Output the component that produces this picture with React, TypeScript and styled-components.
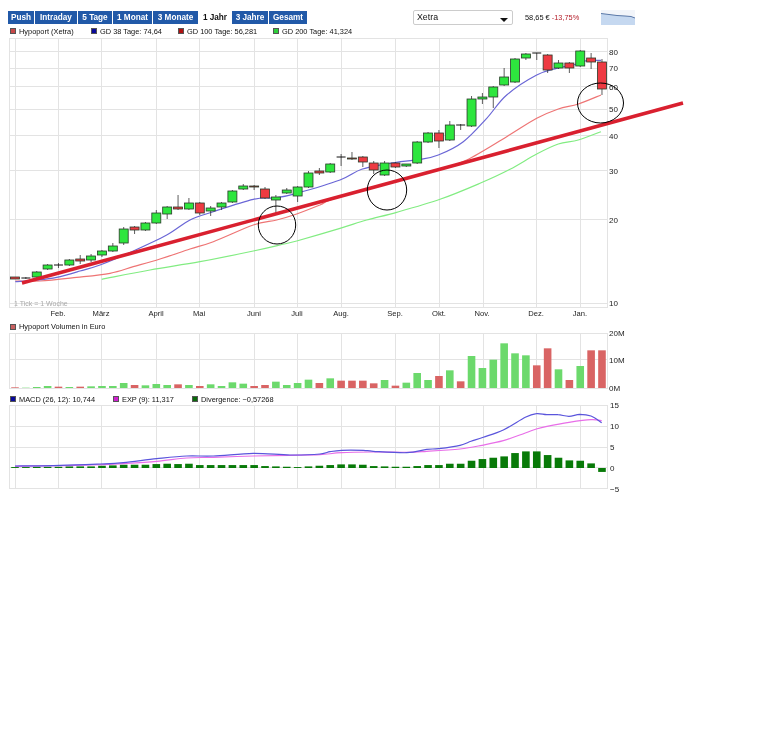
import React from 'react'
import styled, { createGlobalStyle } from 'styled-components'

const GlobalStyle = createGlobalStyle`
  html, body {
    margin: 0;
    padding: 0;
    background: #fff;
  }
`

const FONT = '"Liberation Sans", Arial, sans-serif'

const Page = styled.div`
  width: 768px;
  height: 734px;
  overflow: hidden;
  font-family: ${FONT};
  color: #111;
  background: #fff;
  filter: blur(0.25px);
`

const Toolbar = styled.div`
  display: flex;
  align-items: center;
  height: 14px;
  padding: 10px 0 0 8px;
`

const Tabs = styled.div`
  display: flex;
  gap: 1px;
  width: 405px;
`

const Tab = styled.div<{ $w: number; $active?: boolean }>`
  width: ${({ $w }) => $w}px;
  height: 13px;
  line-height: 13px;
  text-align: center;
  font-size: 8.2px;
  font-weight: bold;
  color: ${({ $active }) => ($active ? '#111' : '#fff')};
  background: ${({ $active }) => ($active ? '#fff' : '#2159a8')};
`

const Select = styled.div`
  position: relative;
  box-sizing: border-box;
  width: 100px;
  height: 15px;
  padding-left: 3px;
  line-height: 13px;
  font-size: 8.8px;
  color: #111;
  border: 1px solid #ccc;
  border-radius: 2px;
  &::after {
    content: '';
    position: absolute;
    right: 4px;
    top: 7px;
    border-left: 4px solid transparent;
    border-right: 4px solid transparent;
    border-top: 4px solid #111;
  }
`

const Price = styled.div`
  width: 76px;
  margin-left: 12px;
  font-size: 7.4px;
  color: #111;
`

const Change = styled.span`
  color: #b5202c;
`

const Legend = styled.div<{ $h: number }>`
  display: flex;
  align-items: center;
  height: ${({ $h }) => $h}px;
  padding-left: 10px;
  font-size: 7.4px;
  color: #111;
`

const LegendItem = styled.div<{ $w?: number }>`
  display: flex;
  align-items: center;
  gap: 3px;
  width: ${({ $w }) => ($w ? `${$w}px` : 'auto')};
`

const Swatch = styled.span<{ $color: string }>`
  width: 4px;
  height: 4px;
  background: ${({ $color }) => $color};
  border: 1px solid #555;
`

const ChartSvg = styled.svg`
  display: block;
  overflow: visible;
  font-family: ${FONT};
`

const AxisText = styled.text<{ $size?: number }>`
  font-size: ${({ $size }) => $size ?? 8}px;
  fill: #222;
`

const GRID = '#e3e3e3'
const XLINES = [9, 15, 58, 101, 156, 199, 254, 297, 341, 395, 439, 483, 536, 580, 607]
const X0 = 15
const STEP = 10.87
const cx = (i: number) => X0 + i * STEP

// [bodyTop, bodyBottom, wickTop, wickBottom, up]
const CANDLES: [number, number, number, number, number][] = [
  [277, 279, 277, 279, 0],
  [278, 278.6, 277, 279, 2],
  [272, 277, 271, 278, 1],
  [265, 269, 264, 270, 1],
  [265, 265.6, 263, 268, 2],
  [260, 265, 259, 266, 1],
  [259, 261, 255, 264, 0],
  [256, 260, 254, 262, 1],
  [251, 255, 250, 257, 1],
  [246, 251, 243, 252, 1],
  [229, 243, 227, 245, 1],
  [227, 230, 226, 234, 0],
  [223, 230, 222, 231, 1],
  [213, 223, 210, 224, 1],
  [207, 214, 206, 219, 1],
  [207, 209, 195, 210, 0],
  [203, 209, 198, 210, 1],
  [203, 213, 202, 215, 0],
  [208, 211, 206, 216, 1],
  [203, 207, 202, 210, 1],
  [191, 202, 190, 203, 1],
  [186, 189, 184, 190, 1],
  [186, 187, 185, 190, 0],
  [189, 198, 187, 199, 0],
  [197, 200, 195, 213, 1],
  [190, 193, 188, 194, 1],
  [187, 196, 186, 202, 1],
  [173, 187, 171, 188, 1],
  [171, 173, 168, 175, 0],
  [164, 172, 163, 173, 1],
  [157, 157.6, 154, 166, 2],
  [158, 159, 152, 160, 0],
  [157, 162, 156, 167, 0],
  [163, 170, 161, 174, 0],
  [163, 175, 161, 176, 1],
  [163, 167, 162, 168, 0],
  [164, 166, 164, 167, 1],
  [142, 163, 141, 164, 1],
  [133, 142, 132, 143, 1],
  [133, 141, 130, 148, 0],
  [125, 140, 121, 141, 1],
  [125, 125.6, 124, 130, 2],
  [99, 126, 96, 127, 1],
  [97, 99, 93, 104, 1],
  [87, 97, 86, 108, 1],
  [77, 85, 68, 86, 1],
  [59, 82, 58, 83, 1],
  [54, 58, 53, 60, 1],
  [53, 53.6, 53, 60, 2],
  [55, 70, 54, 73, 0],
  [63, 68, 60, 69, 1],
  [63, 68, 62, 73, 0],
  [51, 66, 50, 67, 1],
  [58, 62, 53, 69, 0],
  [62, 89, 59, 95, 0],
]

const zoom3 = (pts: number[][]) => pts.map(([x, y]) => [x / 3, 170 + y / 3])
const zoom2 = (pts: number[][]) => pts.map(([x, y]) => [340 + x / 3, y / 3])
const zoom4 = (pts: number[][]) => pts.map(([x, y]) => [340 + x / 3, 170 + y / 3])
const macdA = (pts: number[][]) => pts.map(([x, y]) => [x / 3, 320 + y / 3])
const macdB = (pts: number[][]) => pts.map(([x, y]) => [320 + x / 3, 320 + y / 3])

// Catmull-Rom through the points, the curves in the picture are smooth
const smooth = (pts: number[][]) => {
  let d = `M${pts[0][0].toFixed(1)} ${pts[0][1].toFixed(1)}`
  for (let i = 0; i < pts.length - 1; i += 1) {
    const p0 = pts[Math.max(i - 1, 0)]
    const p1 = pts[i]
    const p2 = pts[i + 1]
    const p3 = pts[Math.min(i + 2, pts.length - 1)]
    const c1x = p1[0] + (p2[0] - p0[0]) / 6
    const c1y = p1[1] + (p2[1] - p0[1]) / 6
    const c2x = p2[0] - (p3[0] - p1[0]) / 6
    const c2y = p2[1] - (p3[1] - p1[1]) / 6
    d += ` C${c1x.toFixed(1)} ${c1y.toFixed(1)} ${c2x.toFixed(1)} ${c2y.toFixed(1)} ${p2[0].toFixed(1)} ${p2[1].toFixed(1)}`
  }
  return d
}

const GD38 = [
  ...zoom3([[46, 335], [110, 330], [170, 322], [240, 303], [300, 285], [395, 245], [500, 195], [570, 150], [640, 125], [760, 88], [830, 83], [890, 70], [1020, 30]]),
  ...zoom2([[65, 508], [150, 490], [240, 478], [295, 465], [370, 425], [440, 355], [500, 285], [590, 225], [650, 205], [700, 195], [740, 182], [783, 181]]),
]
const GD100 = [
  ...zoom3([[46, 333], [120, 333], [230, 322], [330, 310], [400, 290], [480, 267], [570, 237], [640, 215], [760, 165], [830, 150], [890, 132], [960, 105], [1020, 80]]),
  ...zoom2([[290, 510], [380, 480], [500, 410], [590, 355], [655, 327], [715, 312], [783, 285]]),
]
const GD200 = [
  ...zoom3([[305, 328], [450, 300], [600, 275], [760, 243], [840, 225], [890, 213]]),
  ...zoom4([[0, 175], [80, 150], [170, 127], [300, 88], [420, 40]]),
  ...zoom2([[510, 508], [590, 462], [655, 432], [715, 420], [783, 395]]),
]

const VOLUME: [number, number][] = [
  [2, 0], [1, 1], [3, 1], [6, 1], [4, 0], [3, 1], [4, 0], [5, 1], [6, 1], [6, 1],
  [15, 1], [9, 0], [8, 1], [12, 1], [9, 1], [11, 0], [9, 1], [6, 0], [11, 1], [6, 1],
  [17, 1], [13, 1], [6, 0], [9, 0], [19, 1], [9, 1], [15, 1], [25, 1], [15, 0],
  [29, 1], [22, 0], [22, 0], [22, 0], [14, 0], [24, 1], [7, 0], [16, 1], [45, 1], [24, 1],
  [36, 0], [53, 1], [20, 0], [96, 1], [60, 1], [85, 1], [134, 1], [104, 1], [98, 1],
  [68, 0], [119, 0], [56, 1], [24, 0], [66, 1], [113, 0], [113, 0],
]

const DIVERGENCE = [
  1, 1, 2, 2, 2, 3, 3, 3, 5, 6, 8, 8, 8, 10, 11, 10, 11, 7, 7, 7, 7, 7, 7, 4, 3, 2, 1, 3, 5,
  7, 9, 9, 8, 4, 3, 2, 2, 4, 7, 7, 11, 11, 20, 25, 29, 33, 43, 48, 48, 37, 29, 21, 20, 12, -10,
]

const MACD = [
  ...macdA([[45, 438], [180, 436], [300, 432], [370, 428], [470, 416], [560, 408], [640, 408], [760, 400], [870, 405]]),
  ...macdB([[0, 402], [30, 395], [65, 391], [130, 391], [160, 394], [260, 398], [320, 388], [356, 386], [420, 376], [453, 364], [490, 352], [550, 330], [616, 292], [649, 281], [680, 284], [714, 284], [747, 289], [779, 283], [813, 288], [845, 308]]),
]
const EXP = [
  ...macdA([[45, 439], [180, 437], [300, 434], [370, 431], [470, 424], [560, 414], [640, 412], [760, 408], [870, 406]]),
  ...macdB([[0, 404], [65, 398], [160, 396], [260, 397], [320, 394], [420, 387], [486, 376], [550, 362], [616, 339], [649, 327], [681, 319], [747, 307], [813, 299], [845, 302]]),
]

const MONTHS: [string, number][] = [
  ['Feb.', 58], ['März', 101], ['April', 156], ['Mai', 199], ['Juni', 254], ['Juli', 297], ['Aug.', 341],
  ['Sep.', 395], ['Okt.', 439], ['Nov.', 482], ['Dez.', 536], ['Jan.', 580],
]

const Grid = ({ top, bottom, rows }: { top: number; bottom: number; rows: number[] }) => (
  <g stroke={GRID} strokeWidth={1} shapeRendering="crispEdges">
    {XLINES.map((x) => (
      <line key={x} x1={x + 0.5} x2={x + 0.5} y1={top} y2={bottom} />
    ))}
    {[top, ...rows, bottom].map((y) => (
      <line key={y} x1={9} x2={608} y1={y + 0.5} y2={y + 0.5} />
    ))}
  </g>
)

const MainChart = () => (
  <ChartSvg width={700} height={282} viewBox="0 38 700 282">
    <Grid top={38} bottom={307} rows={[51, 68, 86, 109, 135, 170, 219, 303]} />
    {[
      ['80', 52], ['70', 68], ['60', 87], ['50', 109], ['40', 136], ['30', 171], ['20', 220], ['10', 303],
    ].map(([t, y]) => (
      <AxisText key={t} x={609} y={Number(y) + 3}>{t}</AxisText>
    ))}
    {MONTHS.map(([m, x]) => (
      <AxisText key={m} $size={7.6} x={x} y={316} textAnchor="middle">{m}</AxisText>
    ))}
    <text x={14} y={306} fontSize={7} fill="#aaa">1 Tick = 1 Woche</text>

    <path d={smooth(GD200)} fill="none" stroke="#82ec82" strokeWidth={1.2} />
    <path d={smooth(GD100)} fill="none" stroke="#ee7474" strokeWidth={1.2} />
    <path d={smooth(GD38)} fill="none" stroke="#6a66d6" strokeWidth={1.2} />

    {CANDLES.map(([top, bottom, wt, wb, kind], i) => {
      const x = cx(i)
      return (
        <g key={i}>
          <line x1={x} x2={x} y1={wt} y2={wb} stroke="#333" strokeWidth={0.8} />
          {kind === 2 ? (
            <line x1={x - 4.5} x2={x + 4.5} y1={top} y2={top} stroke="#111" strokeWidth={1} />
          ) : (
            <rect
              x={x - 4.5}
              y={top}
              width={9}
              height={bottom - top}
              fill={kind === 1 ? '#2ee63e' : '#ee3a42'}
              stroke="#2a3a2a"
              strokeWidth={0.8}
            />
          )}
        </g>
      )
    })}

    <line x1={22} y1={283} x2={683} y2={103} stroke="#d9202f" strokeWidth={3.6} />
    <ellipse cx={277} cy={225} rx={18.7} ry={19} fill="none" stroke="#000" strokeWidth={1} />
    <ellipse cx={387} cy={190} rx={19.7} ry={20} fill="none" stroke="#000" strokeWidth={1} />
    <ellipse cx={600.5} cy={103} rx={23} ry={20} fill="none" stroke="#000" strokeWidth={1} />
  </ChartSvg>
)

const VolumeChart = () => (
  <ChartSvg width={700} height={60} viewBox="0 333 700 60">
    <Grid top={333} bottom={388} rows={[359]} />
    <AxisText x={609} y={336}>20M</AxisText>
    <AxisText x={609} y={363}>10M</AxisText>
    <AxisText x={609} y={391}>0M</AxisText>
    {VOLUME.map(([h, up], i) => (
      <rect
        key={i}
        x={cx(i) - 3.8}
        y={388 - h / 3}
        width={7.6}
        height={h / 3}
        fill={up ? '#6cd96c' : '#d96464'}
      />
    ))}
  </ChartSvg>
)

const MacdChart = () => (
  <ChartSvg width={700} height={90} viewBox="0 405 700 90">
    <Grid top={405} bottom={488} rows={[426, 447, 467]} />
    {[
      ['15', 405], ['10', 426], ['5', 447], ['0', 468], ['-5', 489],
    ].map(([t, y]) => (
      <AxisText key={t} x={610} y={Number(y) + 3}>{t === '-5' ? '−5' : t}</AxisText>
    ))}
    {DIVERGENCE.map((h, i) => {
      const height = Math.abs(h) / 3 + 0.6
      return (
        <rect
          key={i}
          x={cx(i) - 3.8}
          y={h > 0 ? 468 - height : 468}
          width={7.6}
          height={height}
          fill="#087a08"
        />
      )
    })}
    <path d={smooth(EXP)} fill="none" stroke="#e86ee8" strokeWidth={1.2} />
    <path d={smooth(MACD)} fill="none" stroke="#5a55dc" strokeWidth={1.2} />
  </ChartSvg>
)

const MiniChart = () => (
  <svg width={34} height={15} viewBox="0 0 34 15">
    <rect width={34} height={15} fill="#f2f5fa" />
    <path d="M0 3.5 L8 4.5 L16 5.5 L24 6 L30 6.5 L34 8 L34 15 L0 15 Z" fill="#c5d8f0" />
    <path d="M0 3.5 L8 4.5 L16 5.5 L24 6 L30 6.5 L34 8" fill="none" stroke="#5a78a8" strokeWidth={1} />
  </svg>
)

const App = () => (
  <Page>
    <GlobalStyle />
    <Toolbar>
      <Tabs>
        <Tab $w={26}>Push</Tab>
        <Tab $w={42}>Intraday</Tab>
        <Tab $w={34}>5 Tage</Tab>
        <Tab $w={39}>1 Monat</Tab>
        <Tab $w={45}>3 Monate</Tab>
        <Tab $w={32} $active>1 Jahr</Tab>
        <Tab $w={36}>3 Jahre</Tab>
        <Tab $w={38}>Gesamt</Tab>
      </Tabs>
      <Select>Xetra</Select>
      <Price>58,65 € <Change>-13,75%</Change></Price>
      <MiniChart />
    </Toolbar>
    <Legend $h={14}>
      <LegendItem $w={81}><Swatch $color="#c84848" />Hypoport (Xetra)</LegendItem>
      <LegendItem $w={87}><Swatch $color="#0a0a9a" />GD 38 Tage: 74,64</LegendItem>
      <LegendItem $w={95}><Swatch $color="#b01010" />GD 100 Tage: 56,281</LegendItem>
      <LegendItem><Swatch $color="#2ed03a" />GD 200 Tage: 41,324</LegendItem>
    </Legend>
    <MainChart />
    <Legend $h={13}>
      <LegendItem><Swatch $color="#c86060" />Hypoport Volumen in Euro</LegendItem>
    </Legend>
    <VolumeChart />
    <Legend $h={12}>
      <LegendItem $w={103}><Swatch $color="#0a0a9a" />MACD (26, 12): 10,744</LegendItem>
      <LegendItem $w={79}><Swatch $color="#d020d0" />EXP (9): 11,317</LegendItem>
      <LegendItem><Swatch $color="#0a6a0a" />Divergence: −0,57268</LegendItem>
    </Legend>
    <MacdChart />
  </Page>
)

export default App
